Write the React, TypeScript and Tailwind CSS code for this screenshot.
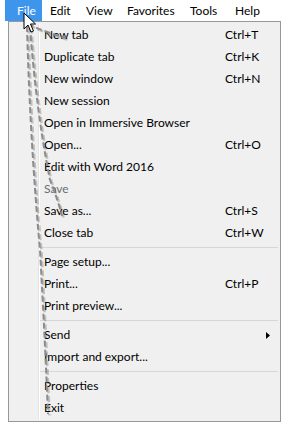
import React from "react";

type Item =
  | { sep: true }
  | { sep?: false; label: string; shortcut?: string; disabled?: boolean; submenu?: boolean };

const menuBar = [
  { label: "File", w: "w-[37px] pl-[12px]" },
  { label: "Edit", w: "w-[36px] pl-[8px]" },
  { label: "View", w: "w-[41px] pl-[8px]" },
  { label: "Favorites", w: "w-[63px] pl-[8px]" },
  { label: "Tools", w: "w-[45px] pl-[8px]" },
  { label: "Help", w: "w-[41px] pl-[8px]" },
];

const items: Item[] = [
  { label: "New tab", shortcut: "Ctrl+T" },
  { label: "Duplicate tab", shortcut: "Ctrl+K" },
  { label: "New window", shortcut: "Ctrl+N" },
  { label: "New session" },
  { label: "Open in Immersive Browser" },
  { label: "Open...", shortcut: "Ctrl+O" },
  { label: "Edit with Word 2016" },
  { label: "Save", disabled: true },
  { label: "Save as...", shortcut: "Ctrl+S" },
  { label: "Close tab", shortcut: "Ctrl+W" },
  { sep: true },
  { label: "Page setup..." },
  { label: "Print...", shortcut: "Ctrl+P" },
  { label: "Print preview..." },
  { sep: true },
  { label: "Send", submenu: true },
  { label: "Import and export..." },
  { sep: true },
  { label: "Properties" },
  { label: "Exit" },
];

function Cursor() {
  return (
    <svg width="14" height="22" viewBox="0 0 14 22" className="absolute left-[23px] top-[12px]">
      <path
        d="M1 1 L1 17 L5 13 L8 20 L10.5 19 L7.5 12 L12.5 12 Z"
        fill="#fff"
        stroke="#000"
        strokeWidth="1"
        strokeLinejoin="miter"
      />
    </svg>
  );
}

function Trails() {
  const paths = [
    "M28 24 Q45 32 66 38",
    "M27 26 Q30 140 40 250 Q45 340 48 414",
    "M30 26 Q36 110 50 180 Q58 200 62 216",
  ];
  return (
    <svg width="284" height="428" className="absolute left-0 top-0 pointer-events-none">
      <g fill="none" strokeWidth="2.5" strokeDasharray="6 3" opacity="0.2" stroke="#000" transform="translate(1.5,1.5)">
        {paths.map((d) => (
          <path key={d} d={d} />
        ))}
      </g>
      <g fill="none" strokeWidth="2" strokeDasharray="6 3" stroke="#8c8c8c">
        {paths.map((d) => (
          <path key={d} d={d} />
        ))}
      </g>
    </svg>
  );
}

export default function App() {
  return (
    <div className="relative w-[284px] h-[428px] bg-white overflow-hidden font-['Lato','Liberation_Sans',sans-serif] text-[12px] leading-none text-black">
      {/* menu bar */}
      <div className="flex h-[21px] items-stretch pl-[5px]">
        {menuBar.map((m, i) => (
          <div
            key={m.label}
            className={
              "flex items-center shrink-0 " + m.w + (i === 0 ? " bg-[#3d95ec] text-white" : "")
            }
          >
            {m.label}
          </div>
        ))}
      </div>

      {/* dropdown */}
      <div className="ml-[8px] w-[273px] h-[401px] border border-[#979797] bg-[#f0f0f0] py-[2px] flex">
        <div className="w-[30px] border-r border-[#e2e3e3]" />
        <div className="flex-1 border-l border-white flex flex-col">
          {items.map((it, i) =>
            it.sep ? (
              <div key={i} className="h-[7px] flex items-center mr-[2px]">
                <div className="w-full h-px bg-[#d7d7d7]" />
              </div>
            ) : (
              <div key={i} className="h-[22px] flex items-center pl-[4px]">
                <span className={"flex-1 " + (it.disabled ? "text-[#6d6d6d]" : "")}>{it.label}</span>
                <span className="w-[55px] flex items-center">
                  {it.shortcut}
                  {it.submenu && (
                    <svg width="4" height="7" viewBox="0 0 4 7" className="ml-[41px]">
                      <path d="M0 0 L4 3.5 L0 7 Z" fill="#000" />
                    </svg>
                  )}
                </span>
              </div>
            )
          )}
        </div>
      </div>

      <Trails />
      <Cursor />
    </div>
  );
}
